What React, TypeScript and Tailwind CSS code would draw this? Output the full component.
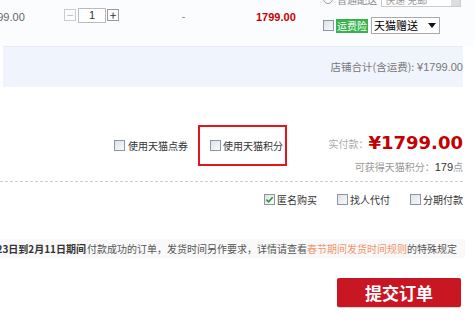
import React from 'react'

function Box({ checked = false }: { checked?: boolean }) {
    return (
        <span className="inline-flex w-[11px] h-[11px] border border-[#8c96a6] bg-gradient-to-br from-[#dfe3ea] to-[#f7f8fa] items-center justify-center shrink-0">
            {checked && (
                <svg viewBox="0 0 10 10" className="w-[9px] h-[9px]">
                    <path d="M1.5 5.2 L4 7.6 L8.5 2.4" fill="none" stroke="#2f9a2f" strokeWidth="1.8" />
                </svg>
            )}
        </span>
    )
}

export default function App() {
    return (
        <div className="w-[474px] h-[326px] overflow-hidden bg-white text-[10px] text-[#333] font-['Noto_Sans_CJK_SC','Noto_Sans',sans-serif] whitespace-nowrap">
            {/* product row */}
            <div className="h-[46px] bg-[#fbfcfe] flex">
                <div className="w-[62px] pt-[9px] text-[11px] text-[#666] font-['Liberation_Sans',sans-serif] -ml-[15px] shrink-0">1799.00</div>
                <div className="flex items-start pt-[8px] ml-[17px]">
                    <span className="w-[12px] h-[12px] mt-[1px] border border-[#ccc] text-[#bbb] leading-[9px] text-center text-[12px]">−</span>
                    <span className="w-[28px] h-[15px] ml-[2px] border border-[#bbb] bg-white text-center leading-[13px] text-[11px] font-['Liberation_Sans',sans-serif]">1</span>
                    <span className="w-[12px] h-[12px] mt-[1px] ml-[1px] border border-[#999] text-[#333] leading-[9px] text-center text-[12px]">+</span>
                </div>
                <div className="w-[65px] pt-[8px] text-center text-[#666] ml-[32px]">-</div>
                <div className="pt-[9px] ml-[40px] font-bold text-[11px] text-[#c40000] font-['Liberation_Sans',sans-serif]">1799.00</div>
                <div className="ml-auto mr-[13px] flex flex-col items-end -mt-[9px]">
                    <div className="flex items-center gap-[4px] h-[16px]">
                        <span className="w-[10px] h-[10px] rounded-full border border-[#999]" />
                        <span className="text-[#888]">普通配送</span>
                        <span className="w-[80px] h-[16px] border border-[#ccc] bg-white flex items-center justify-between pl-[3px] text-[#999]">快递 免邮<span className="w-[9px] h-full bg-[#ddd]" /></span>
                    </div>
                    <div className="flex items-center mt-[10px] mr-[21px]">
                        <Box />
                        <span className="ml-[2px] bg-[#37b24d] text-white px-[1px] h-[14px] leading-[14px] text-[10px]">运费险</span>
                        <span className="ml-[3px] w-[69px] h-[17px] border border-[#aaa] bg-white flex items-center justify-between pl-[2px] text-black text-[11px]">
                            天猫赠送
                            <span className="w-[14px] flex justify-center">
                                <svg viewBox="0 0 8 5" className="w-[8px] h-[5px]"><path d="M0 0 H8 L4 5 Z" fill="#111" /></svg>
                            </span>
                        </span>
                    </div>
                </div>
            </div>

            {/* shop total */}
            <div className="h-[41px] ml-[3px] mr-[11px] bg-[#f0f4fd] flex items-center justify-end text-[10.5px] text-[#777] border-t border-[#e6ebf5]">
                店铺合计(含运费): <span className="ml-[3px] text-[11px] font-['Liberation_Sans',sans-serif]">¥1799.00</span>
            </div>

            {/* coupons / points */}
            <div className="flex mt-[38px] h-[42px] pr-[11px]">
                <div className="flex items-center gap-[3px] ml-[114px] h-[42px] -mt-[1px]">
                    <Box />
                    <span>使用天猫点券</span>
                </div>
                <div className="ml-[10px] w-[89px] h-[41px] border-2 border-[#e4151c] flex items-center pl-[10px] gap-[2px]">
                    <Box />
                    <span>使用天猫积分</span>
                </div>
                <div className="ml-auto flex flex-col items-end">
                    <div className="flex items-center mt-[7px] h-[22px]">
                        <span className="text-[#aaa]">实付款：</span>
                        <span className="text-[#c40000] font-bold text-[18px] leading-[22px] font-['DejaVu_Sans',sans-serif]">¥1799.00</span>
                    </div>
                    <div className="text-[#999] mt-[5px]">可获得天猫积分：<span className="text-[#333] text-[11px] font-['Liberation_Sans',sans-serif]">179</span>点</div>
                </div>
            </div>

            <div className="mt-[14px] mr-[11px] border-t border-dashed border-[#ccc]" />

            {/* options */}
            <div className="flex justify-end items-center gap-[20px] mt-[10px] pr-[11px] h-[14px]">
                <div className="flex items-center gap-[2px]"><Box checked /><span>匿名购买</span></div>
                <div className="flex items-center gap-[2px]"><Box /><span>找人代付</span></div>
                <div className="flex items-center gap-[2px]"><Box /><span>分期付款</span></div>
            </div>

            {/* notice */}
            <div className="mt-[33px] mr-[9px] h-[19px] bg-[#f9f9f9] flex items-center justify-end pr-[8px] overflow-hidden text-[10px] text-[#555]">
                <span className="font-bold text-[#333] shrink-0">1月23日到2月11日期间</span>
                <span className="ml-[1px] shrink-0">付款成功的订单，发货时间另作要求，详情请查看</span>
                <span className="text-[#f0966b] shrink-0">春节期间发货时间规则</span>
                <span className="shrink-0">的特殊规定</span>
            </div>

            {/* submit */}
            <div className="flex justify-end pr-[13px] mt-[20px]">
                <button className="w-[124px] h-[29px] bg-[#c81623] rounded-[2px] text-white font-bold text-[17px] shadow-[0_1px_1px_rgba(0,0,0,0.2)]">提交订单</button>
            </div>
        </div>
    )
}
